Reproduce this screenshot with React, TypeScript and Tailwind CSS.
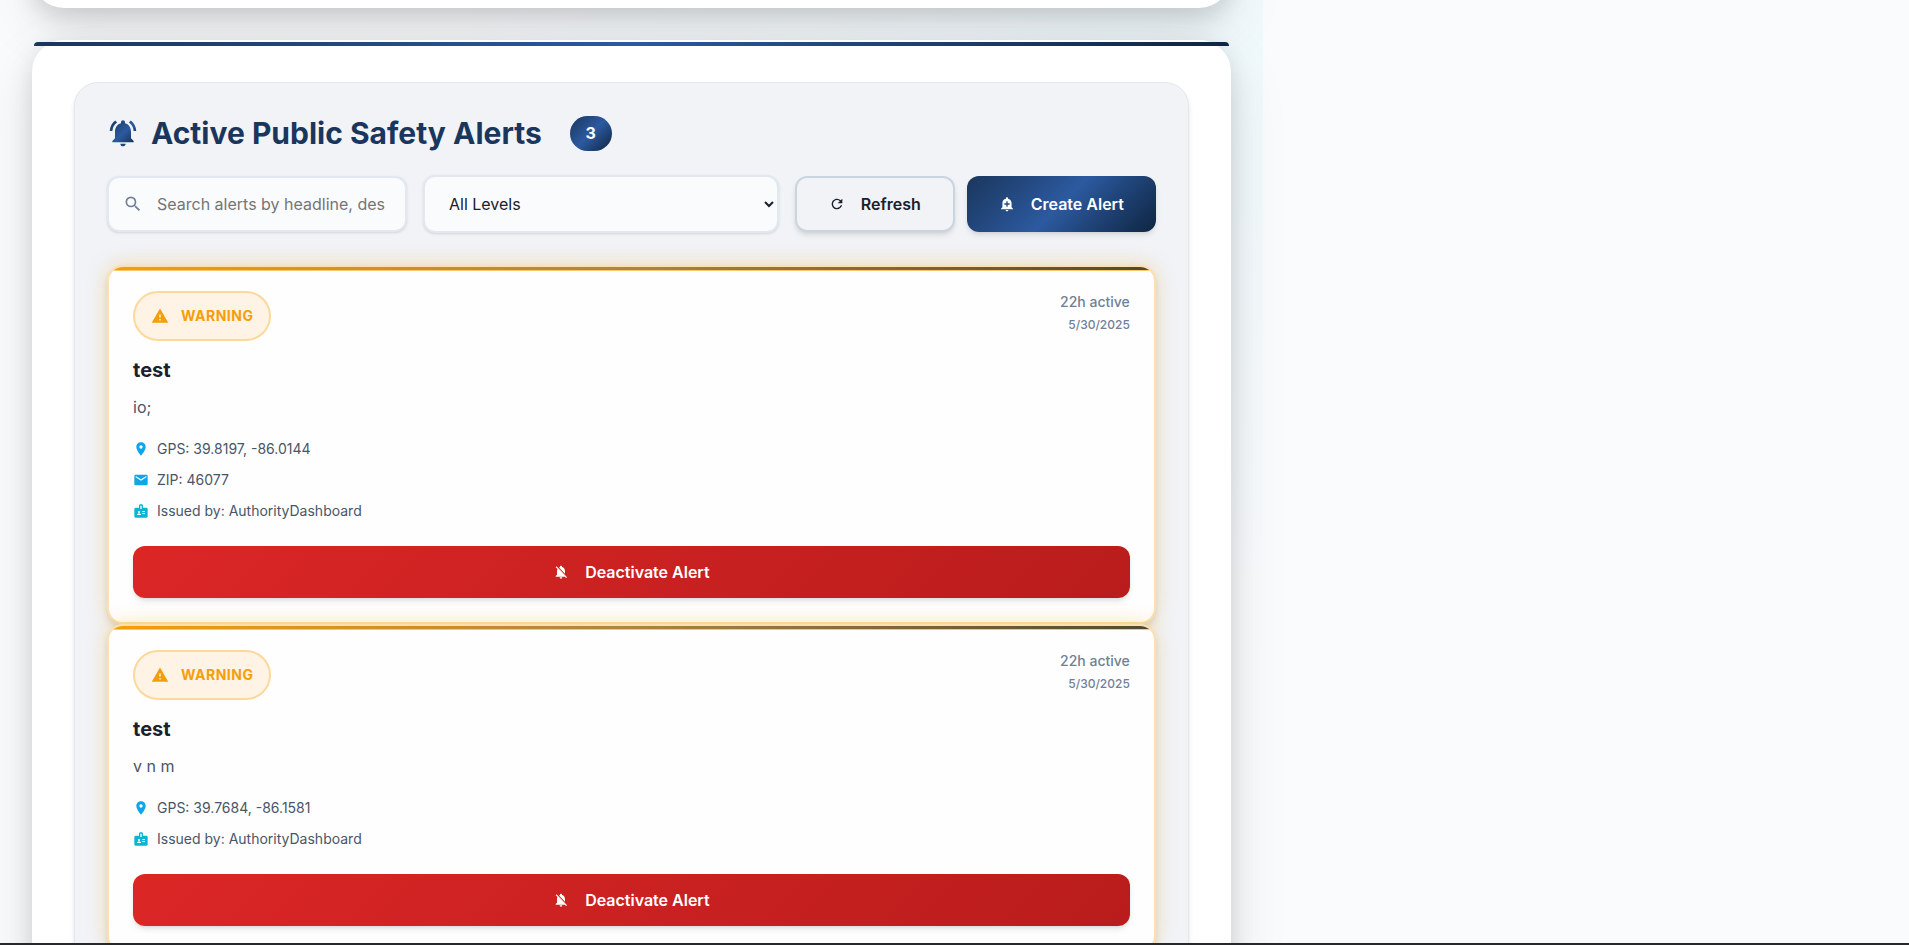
import {
  MdAddAlert,
  MdBadge,
  MdEmail,
  MdLocationOn,
  MdNotificationsOff,
  MdRefresh,
  MdSearch,
  MdWarning,
} from "react-icons/md";

type Alert = {
  id: number;
  headline: string;
  description: string;
  gps: string;
  zip?: string;
  issuer: string;
  age: string;
  date: string;
};

const alerts: Alert[] = [
  {
    id: 1,
    headline: "test",
    description: "io;",
    gps: "39.8197, -86.0144",
    zip: "46077",
    issuer: "AuthorityDashboard",
    age: "22h active",
    date: "5/30/2025",
  },
  {
    id: 2,
    headline: "test",
    description: "v n m",
    gps: "39.7684, -86.1581",
    issuer: "AuthorityDashboard",
    age: "22h active",
    date: "5/30/2025",
  },
];

function RingingBell() {
  return (
    <svg viewBox="0 0 24 24" className="size-8 shrink-0" aria-hidden="true">
      <defs>
        <linearGradient id="bell" x1="0" y1="0" x2="1" y2="1">
          <stop offset="0" stopColor="#1a365d" />
          <stop offset="0.5" stopColor="#2c5aa0" />
          <stop offset="1" stopColor="#0f2542" />
        </linearGradient>
      </defs>
      <path
        fill="url(#bell)"
        d="M7.58 4.08 6.15 2.65C3.75 4.48 2.17 7.3 2.03 10.5h2a8.445 8.445 0 0 1 3.55-6.42zm12.39 6.42h2c-.15-3.2-1.73-6.02-4.12-7.85l-1.42 1.43a8.495 8.495 0 0 1 3.54 6.42zM18 11c0-3.07-1.64-5.64-4.5-6.32V4c0-.83-.67-1.5-1.5-1.5s-1.5.67-1.5 1.5v.68C7.63 5.36 6 7.92 6 11v5l-2 2v1h16v-1l-2-2v-5zm-6 11c.14 0 .27-.01.4-.04.65-.14 1.18-.58 1.44-1.18.1-.24.15-.5.15-.78h-4c.01 1.1.9 2 2.01 2z"
      />
    </svg>
  );
}

function AlertCard({ alert }: { alert: Alert }) {
  return (
    <article className="relative rounded-2xl border-2 border-[#fde0ae] bg-[#fefefe] p-6 shadow-[0_0_20px_rgba(245,158,11,0.3),0_4px_6px_rgba(0,0,0,0.1)]">
      <div className="absolute inset-0 overflow-hidden rounded-[14px]">
        <div className="h-1 border-b border-[#fbc66b] bg-linear-to-r/srgb from-[#f59e0b] via-[#ad8540] to-[#51492e]" />
      </div>
      <div className="relative">
        <div className="flex items-start justify-between">
          <span className="flex h-[50px] items-center gap-3 rounded-full border-2 border-[#fbd99d] bg-[#fef3e4] px-4 text-sm font-bold tracking-[0.5px] text-[#f59e0b]">
            <MdWarning className="size-[18px]" aria-hidden="true" />
            WARNING
          </span>
          <div className="text-right font-medium text-[#718096]">
            <p className="text-sm leading-[22px]">{alert.age}</p>
            <p className="text-xs leading-6">{alert.date}</p>
          </div>
        </div>
        <h3 className="mt-4 text-xl leading-[26px] font-bold text-[#1a202c]">{alert.headline}</h3>
        <p className="mt-2.5 text-base leading-7 text-[#4a5568]">{alert.description}</p>
        <ul className="mt-4 flex flex-col gap-2 text-sm leading-[23px] text-[#4a5568]">
          <li className="flex items-center gap-2">
            <MdLocationOn className="size-4 text-[#0ea5e9]" aria-hidden="true" />
            GPS: {alert.gps}
          </li>
          {alert.zip && (
            <li className="flex items-center gap-2">
              <MdEmail className="size-4 text-[#0ea5e9]" aria-hidden="true" />
              ZIP: {alert.zip}
            </li>
          )}
          <li className="flex items-center gap-2">
            <MdBadge className="size-4 text-[#06b6d4]" aria-hidden="true" />
            Issued by: {alert.issuer}
          </li>
        </ul>
        <button
          type="button"
          className="mt-6 flex h-[52px] w-full items-center justify-center gap-4 rounded-xl bg-linear-135 from-[#dc2626] to-[#b91c1c] text-base font-semibold text-white shadow-md"
        >
          <MdNotificationsOff className="size-4" aria-hidden="true" />
          Deactivate Alert
        </button>
      </div>
    </article>
  );
}

export default function App() {
  return (
    <div className="h-screen overflow-hidden border-b-2 border-[#26282c] bg-[#fafbfd] font-['Inter',sans-serif]">
      <main className="w-[66.15%] bg-[radial-gradient(ellipse_900px_600px_at_100%_5%,#f0f9fc_0%,#fafbfd_100%)] px-8">
        <div className="pt-px">
          <section
            aria-hidden="true"
            className="-mt-16 h-[71px] rounded-[32px] bg-white shadow-[0_20px_60px_rgba(0,0,0,0.1),0_8px_24px_rgba(0,0,0,0.14)]"
          />
        </div>
        <section className="relative mt-8 rounded-[32px] border-2 border-white bg-white p-10 shadow-[0_20px_60px_rgba(0,0,0,0.1),0_8px_24px_rgba(0,0,0,0.12)]">
          <div className="absolute inset-x-0 top-0 h-1 rounded-t-[32px] bg-linear-to-r from-[#1a365d] via-[#2c5aa0] to-[#0f2542]" />
          <div className="rounded-3xl border border-[#e2e8f0] bg-[#f1f3f7] p-8 shadow-md">
            <header className="flex h-9 items-center">
              <RingingBell />
              <h2 className="ml-3 text-[30px] leading-9 font-bold text-[#1a365d]">
                Active Public Safety Alerts
              </h2>
              <span className="ml-7 flex h-[35px] w-[42px] items-center justify-center rounded-[20px] bg-linear-135 from-[#1a365d] via-[#2c5aa0] to-[#0f2542] text-base font-bold text-white">
                3
              </span>
            </header>
            <div className="mt-6 flex items-center gap-4">
              <label className="relative w-[300px] shrink-0">
                <span className="sr-only">Search alerts</span>
                <MdSearch
                  className="absolute top-[18px] left-4 size-5 text-[#718096]"
                  aria-hidden="true"
                />
                <input
                  type="text"
                  placeholder="Search alerts by headline, description"
                  className="h-14 w-full rounded-xl border-2 border-[#e2e8f0] bg-[#fafbfd] pr-5 pl-12 text-base text-[#1a202c] shadow-sm placeholder:text-[#757575]"
                />
              </label>
              <select
                aria-label="Alert level"
                className="h-[58px] min-w-0 flex-1 rounded-xl border-2 border-[#e2e8f0] bg-[#fafbfd] pl-5 text-base text-[#1a202c] shadow-sm"
              >
                <option>All Levels</option>
              </select>
              <div className="flex gap-3">
                <button
                  type="button"
                  className="flex h-14 w-[160px] items-center justify-center gap-4 rounded-xl border-2 border-[#cbd5e0] bg-[#f1f3f7] text-base font-semibold text-[#1a202c] shadow-md"
                >
                  <MdRefresh className="size-4" aria-hidden="true" />
                  Refresh
                </button>
                <button
                  type="button"
                  className="flex h-14 w-[189px] items-center justify-center gap-4 rounded-xl bg-linear-135 from-[#1a365d] via-[#2c5aa0] to-[#0f2542] text-base font-semibold text-white shadow-md"
                >
                  <MdAddAlert className="size-4" aria-hidden="true" />
                  Create Alert
                </button>
              </div>
            </div>
            <div className="mt-8">
              {alerts.map((alert) => (
                <AlertCard key={alert.id} alert={alert} />
              ))}
            </div>
          </div>
        </section>
      </main>
    </div>
  );
}
